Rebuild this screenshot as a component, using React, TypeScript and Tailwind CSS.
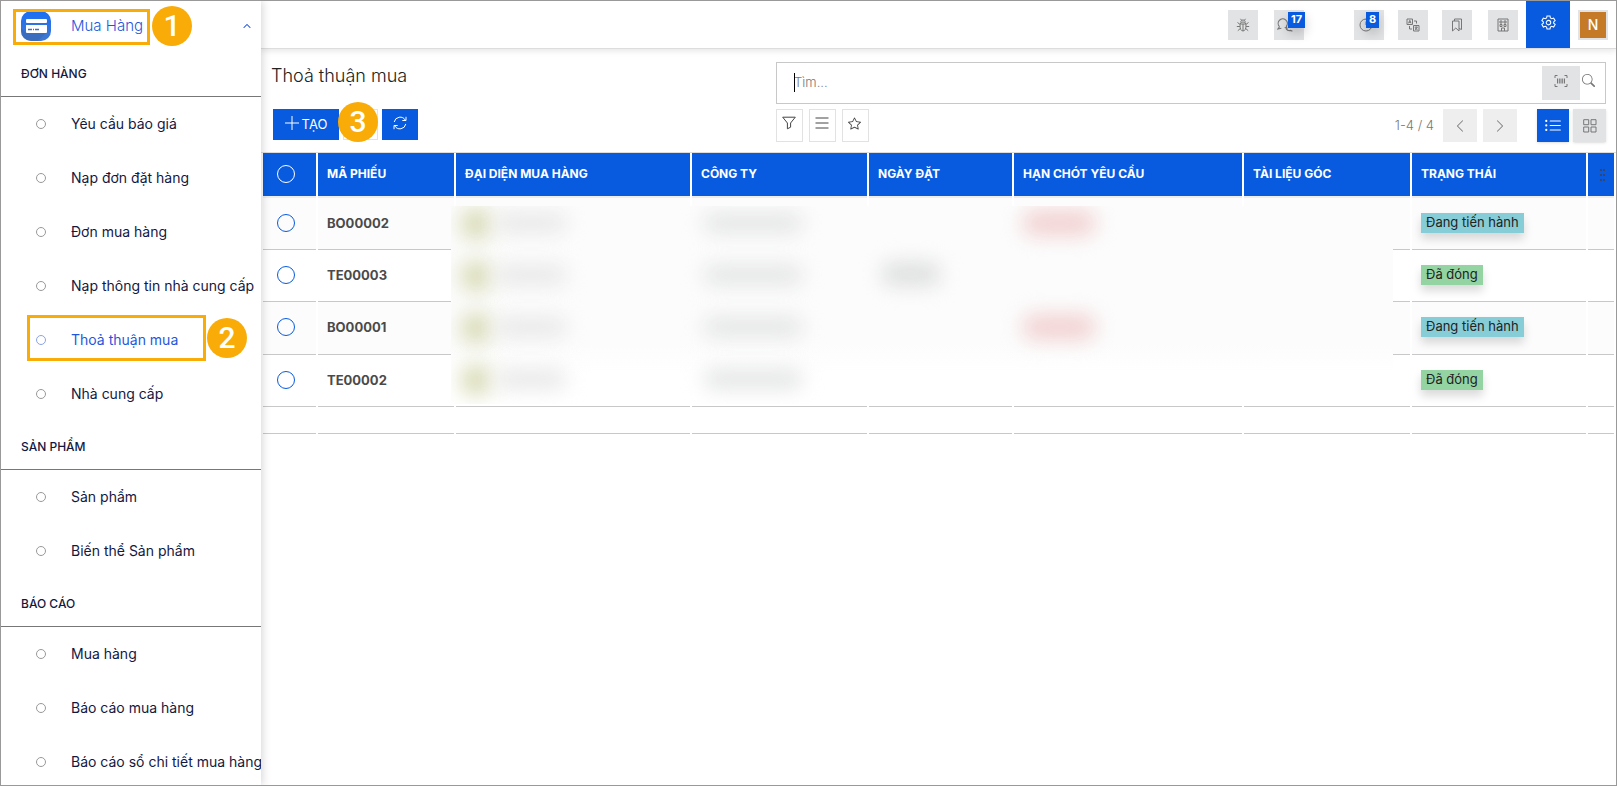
import React, { useState } from 'react';
import { BsChevronLeft, BsChevronRight, BsChevronUp, BsListUl, BsSearch, BsStar } from 'react-icons/bs';

type Status = 'open' | 'closed';

interface Agreement {
  code: string;
  status: Status;
}

const menu = [
  {
    title: 'ĐƠN HÀNG',
    items: [
      'Yêu cầu báo giá',
      'Nạp đơn đặt hàng',
      'Đơn mua hàng',
      'Nạp thông tin nhà cung cấp',
      'Thoả thuận mua',
      'Nhà cung cấp',
    ],
  },
  { title: 'SẢN PHẨM', items: ['Sản phẩm', 'Biến thể Sản phẩm'] },
  { title: 'BÁO CÁO', items: ['Mua hàng', 'Báo cáo mua hàng', 'Báo cáo sổ chi tiết mua hàng'] },
];

const columns = [
  { label: 'MÃ PHIẾU', width: 'w-[136px]' },
  { label: 'ĐẠI DIỆN MUA HÀNG', width: 'w-[234px]' },
  { label: 'CÔNG TY', width: 'w-[175px]' },
  { label: 'NGÀY ĐẶT', width: 'w-[143px]' },
  { label: 'HẠN CHÓT YÊU CẦU', width: 'w-[228px]' },
  { label: 'TÀI LIỆU GÓC', width: 'w-[166px]' },
  { label: 'TRẠNG THÁI', width: 'w-[174px]' },
];

const agreements: Agreement[] = [
  { code: 'BO00002', status: 'open' },
  { code: 'TE00003', status: 'closed' },
  { code: 'BO00001', status: 'open' },
  { code: 'TE00002', status: 'closed' },
];

// Thin line icons, all on a 14px grid
const iconPaths = {
  bug: 'M7 4c-2 0-3 1.500-3 4s1 5 3 5 3-2.500 3-5-1-4-3-4ZM7 6v7M4.700 4.500C4.700 3 5.500 2 7 2s2.300 1 2.300 2.500M5.500 2.200 4.500.8M8.500 2.200l1-1.400M4.200 6.500 1.500 4.500M9.800 6.500l2.700-2M4 8.500H.8M10 8.500h3.200M4.300 10.500l-2.500 2.200M9.700 10.500l2.500 2.200M4.500 6h5',
  chats: 'M2.200 8.500A4 4 0 1 1 8.300 8l.4 2.200L6.800 9M2.200 8.500.8 10.500l3-.6M8 10.500c1 1.300 2.500 1.700 4 1.200l1.500.8M9.500 4.500c2.500 0 4 2.500 3 5',
  clock: 'M7 1a6 6 0 1 0 6 6M7 3.500V7h3M7 1v1',
  translate: 'M1 1h5.500v5.500H1zM7.500 7.500H13V13H7.500zM2.500 5.300l1.300-3 1.200 3M3 4.300h1.600M8.700 9.200h3M10.200 8.500v.7M8.900 11.800c1.300-.5 2-1.300 2.200-2.500M9.200 10.200l2.400 1.600M8 3h2.500v2.500M3.500 8v3h2.500',
  bookmarks: 'M2.500 3h6.500v10L5.800 10 2.500 13ZM4.500 3V1h7v10.500L9 10.500',
  building: 'M2 1h10v12H2zM5.500 13v-3h3v3M4 3h2v2H4zM8 3h2v2H8zM4 6.500h2v2H4zM8 6.500h2v2H8z',
  gear: 'M5.600 1h2.800l.4 1.800 1.200.7 1.800-.6 1.400 2.400L11.800 6.500v1.200l1.400 1.100-1.400 2.400-1.800-.6-1.200.7-.4 1.700H5.600l-.4-1.700-1.200-.7-1.800.6L.8 8.800l1.400-1.100V6.500L.8 5.300l1.400-2.400 1.800.6 1.200-.7ZM7 5a2.100 2.100 0 1 0 0 4.200A2.100 2.100 0 0 0 7 5Z',
  plus: 'M7 0v14M0 7h14',
  refresh: 'M1.200 6A6 6 0 0 1 12.300 4.200M13 .8v3.700H9.300M12.800 8A6 6 0 0 1 1.700 9.800M1 13.200V9.500h3.700',
  funnel: 'M.7 1.200h12.600L8.600 7v4.200l-3.200 1.600V7Z',
  lines: 'M.5 2h13M.5 7h13M.5 12h13',
  scan: 'M1 4V1.500h2.500M10.500 1.500H13V4M13 10v2.500h-2.500M3.500 12.500H1V10M3.500 4.500v5M5.300 4.500v5M7 4.500v5M8.700 4.500v5M10.500 4.500v5',
  grid: 'M.7.7h5v5h-5zM8 .7h5v5H8zM.7 8h5v5h-5zM8 8h5v5H8z',
};

const Icon: React.FC<{ name: keyof typeof iconPaths; className?: string }> = ({ name, className = 'h-[14px] w-[14px]' }) => (
  <svg viewBox="0 0 14 14" className={className} fill="none" stroke="currentColor" strokeWidth="1" aria-hidden="true">
    <path d={iconPaths[name]} />
  </svg>
);

const Step: React.FC<{ n: number; className: string }> = ({ n, className }) => (
  <span
    className={`absolute z-20 flex h-10 w-10 items-center justify-center rounded-full bg-[#f9ac08] font-[Roboto,sans-serif] text-[30px] leading-none font-medium text-white ${className}`}
  >
    {n}
  </span>
);

const CardLogo = () => (
  <svg viewBox="0 0 30 30" className="h-[30px] w-[30px]" aria-hidden="true">
    <defs>
      <linearGradient id="logo" x1="0" y1="0" x2="0" y2="1">
        <stop offset="0" stopColor="#1a6ff5" />
        <stop offset="1" stopColor="#4178cf" />
      </linearGradient>
    </defs>
    <rect width="30" height="30" rx="10" fill="url(#logo)" />
    <path d="M5 22 0 17v3a10 10 0 0 0 10 10h7l8-8Z" fill="#3a63a8" opacity=".5" />
    <rect x="5" y="8" width="21" height="4" rx="1" fill="#fff" />
    <path d="M5 14h21v7a1 1 0 0 1-1 1H6a1 1 0 0 1-1-1Z" fill="#fff" />
    <path d="M7 18.500h4M12 18.500h1M14 18.500h4" stroke="#3d6fc4" strokeWidth="1.500" />
  </svg>
);

const Sidebar = () => (
  <aside className="relative z-10 w-[260px] shrink-0 overflow-hidden bg-white text-[#14183f] shadow-[2px_0_8px_rgba(0,0,0,0.15)]">
    <button className="relative flex h-[47px] w-full items-center pt-[3px] pl-5 text-[#1f57dc]">
      <CardLogo />
      <span className="pl-5 text-[15px] font-light">Mua Hàng</span>
      <BsChevronUp className="mr-[10px] ml-auto h-2 w-2 stroke-1" />
      <span className="absolute top-2 left-3 h-9 w-[137px] border-3 border-[#f9ac08]" />
      <Step n={1} className="top-[5px] left-[151px]" />
    </button>
    {menu.map((section) => (
      <nav key={section.title} aria-label={section.title}>
        <h2 className="flex h-[49px] items-center border-b border-[#777] pt-1 pl-5 text-xs font-medium">
          {section.title}
        </h2>
        <ul>
          {section.items.map((item) => {
            const active = item === 'Thoả thuận mua';
            return (
              <li key={item} className="relative">
                <a
                  href="#"
                  className={`flex h-[54px] items-center pl-[35px] text-sm whitespace-nowrap ${active ? 'text-[#1f57dc]' : ''}`}
                >
                  <span
                    className={`mr-[25px] h-[10px] w-[10px] shrink-0 rounded-full border ${active ? 'border-[#8aa4e8]' : 'border-[#999]'}`}
                  />
                  {item}
                </a>
                {active && (
                  <>
                    <span className="pointer-events-none absolute top-[2px] left-[26px] h-[46px] w-[179px] border-3 border-[#f9ac08]" />
                    <Step n={2} className="top-[5px] left-[206px]" />
                  </>
                )}
              </li>
            );
          })}
        </ul>
      </nav>
    ))}
  </aside>
);

const topButton = 'relative flex h-[30px] w-[30px] items-center justify-center bg-[#e2e3e5] text-[#777]';
const badge =
  'absolute top-[2px] flex h-4 items-center justify-center bg-[#085bde] text-[11px] leading-none font-bold text-white shadow-[0_5px_12px_rgba(0,0,0,0.2)]';

const TopBar = () => (
  <header className="flex h-[48px] items-center justify-end border-b border-[#ddd] bg-white pr-2 shadow-[0_2px_6px_rgba(0,0,0,0.1)]">
    <button aria-label="Gỡ lỗi" className={`${topButton} mr-4`}>
      <Icon name="bug" />
    </button>
    <button aria-label="Trò chuyện" className={`${topButton} mr-[50px] pr-2`}>
      <Icon name="chats" className="h-4 w-4" />
      <span className={`${badge} -right-px w-[17px]`}>17</span>
    </button>
    <button aria-label="Hoạt động" className={`${topButton} mr-[14px] pr-[6px]`}>
      <Icon name="clock" />
      <span className={`${badge} right-[5px] w-[13px]`}>8</span>
    </button>
    <button aria-label="Ngôn ngữ" className={`${topButton} mr-[14px]`}>
      <Icon name="translate" />
    </button>
    <button aria-label="Dấu trang" className={`${topButton} mr-4`}>
      <Icon name="bookmarks" />
    </button>
    <button aria-label="Công ty" className={`${topButton} mr-2`}>
      <Icon name="building" />
    </button>
    <button aria-label="Cài đặt" className="mr-2 flex h-[47px] w-11 items-center justify-center bg-[#085bde] pb-1 text-white">
      <Icon name="gear" className="h-[15px] w-[15px]" />
    </button>
    <button className="h-[30px] w-[30px] border-2 border-[#e2e3e5] bg-[#c47a26] text-sm font-medium text-white">N</button>
  </header>
);

const filterButton = 'flex h-[33px] w-[27px] items-center justify-center border border-[#e2e2e2] pr-[2px] pb-[5px] text-[#444]';

const Toolbar = () => {
  const [query, setQuery] = useState('');

  return (
    <div className="grid grid-cols-[505fr_830fr] px-[10px] pt-[13px] pb-[10px]">
      <div>
        <h1 className="h-[47px] text-lg leading-7 font-light text-[#222]">Thoả thuận mua</h1>
        <div className="relative flex gap-1 pl-[2px]">
          <button className="flex h-[31px] w-[66px] items-center justify-center gap-[3px] bg-[#085bde] text-[13px] text-white">
            <Icon name="plus" className="mb-[3px] h-[14px] w-[14px]" />
            TẠO
          </button>
          <button aria-label="Tải xuống" className="h-[31px] w-[35px] border border-[#e2e2e2]" />
          <button aria-label="Tải lại" className="flex h-[31px] w-9 items-center justify-center bg-[#085bde] pb-[3px] text-white">
            <Icon name="refresh" />
          </button>
          <Step n={3} className="-top-[7px] left-[67px]" />
        </div>
      </div>

      <div>
        <div className="relative flex h-[42px] border border-[#c8c8c8] pt-[3px]">
          <span className="absolute top-[10px] left-[17px] h-[19px] w-px bg-black" />
          <input
            aria-label="Tìm kiếm"
            value={query}
            onChange={(e) => setQuery(e.target.value)}
            placeholder="Tìm..."
            className="h-8 min-w-0 flex-1 pl-[17px] text-[13px] font-light outline-none placeholder:text-[#777]"
          />
          <button aria-label="Quét mã" className="flex h-[34px] w-[38px] items-center justify-center bg-[#e2e3e5] pb-1 text-[#777]">
            <Icon name="scan" />
          </button>
          <button aria-label="Tìm" className="mr-[9px] flex h-7 w-4 items-center justify-center text-[#777]">
            <BsSearch className="h-[13px] w-[13px]" />
          </button>
        </div>
        <div className="mt-[5px] flex items-center gap-[6px] text-[#777]">
          <button aria-label="Lọc" className={filterButton}>
            <Icon name="funnel" />
          </button>
          <button aria-label="Nhóm" className={filterButton}>
            <Icon name="lines" />
          </button>
          <button aria-label="Yêu thích" className={filterButton}>
            <BsStar className="h-[13px] w-[13px]" />
          </button>
          <span className="mr-[3px] ml-auto text-[13px] font-light">1-4 / 4</span>
          <button aria-label="Trang trước" className="flex h-[33px] w-[34px] items-center justify-center bg-[#eee]">
            <BsChevronLeft className="h-[14px] w-[14px]" />
          </button>
          <button aria-label="Trang sau" className="flex h-[33px] w-[34px] items-center justify-center bg-[#eee]">
            <BsChevronRight className="h-[14px] w-[14px]" />
          </button>
          <button
            aria-label="Danh sách"
            className="ml-[14px] flex h-[33px] w-8 items-center justify-center bg-[#085bde] text-white shadow"
          >
            <BsListUl className="h-[18px] w-[18px]" />
          </button>
          <button aria-label="Lưới" className="-ml-[2px] flex h-[33px] w-[33px] items-center justify-center bg-[#e2e3e5] shadow">
            <Icon name="grid" />
          </button>
        </div>
      </div>
    </div>
  );
};

const smudge = 'absolute rounded-full blur-[10px]';

// Private columns are covered by a smeared panel
const PrivacyMask = () => (
  <div className="pointer-events-none absolute top-[53px] right-[223px] left-[190px] overflow-hidden bg-linear-to-b from-[#fcfcfc] from-70% to-white to-85%">
    {agreements.map((row, i) => (
      <div key={row.code} className="relative h-[52px] last:h-[42px]">
        <span className={`${smudge} top-[2px] left-[9px] h-8 w-8 bg-[#dadcb8]`} />
        <span className={`${smudge} top-[7px] left-[44px] h-5 w-[72px] bg-[#e8e8e8]`} />
        <span className={`${smudge} top-[7px] left-[252px] h-5 w-[100px] bg-[#e4e5e5]`} />
        {i === 1 && <span className={`${smudge} top-1 left-[430px] h-6 w-[60px] bg-[#dedfdf]`} />}
        {i % 2 === 0 && <span className={`${smudge} top-1 left-[571px] h-[26px] w-[74px] bg-[#f2d2d2]`} />}
      </div>
    ))}
  </div>
);

const circle = 'block h-[18px] w-[18px] appearance-none rounded-full border';

const AgreementTable = () => (
  <div className="relative border-t border-[#ddd]">
    <table className="w-full table-fixed border-separate border-spacing-x-[2px] border-spacing-y-0">
      <thead>
        <tr className="h-[45px] text-left text-xs text-white">
          <th className="w-[53px] border-b-2 border-[#eee] bg-[#085bde] pb-[2px] pl-[14px]">
            <input type="checkbox" aria-label="Chọn tất cả" className={`${circle} border-white`} />
          </th>
          {columns.map((col) => (
            <th
              key={col.label}
              className={`${col.width} border-b-2 border-[#eee] bg-[#085bde] pb-[2px] pl-[9px] font-bold whitespace-nowrap`}
            >
              {col.label}
            </th>
          ))}
          <th className="w-[26px] border-b-2 border-[#eee] bg-[#085bde] pl-3">
            <svg viewBox="0 0 6 14" className="h-[14px] w-[6px]" fill="#34466e" aria-hidden="true">
              <path d="M0 1h2v2H0zM3 1h2v2H3zM0 6h2v2H0zM3 6h2v2H3zM0 11h2v2H0zM3 11h2v2H3z" />
            </svg>
          </th>
        </tr>
      </thead>
      <tbody>
        {agreements.map((row) => (
          <tr key={row.code} className="h-[52px] odd:bg-[#fcfcfc] nth-[3]:h-[53px]">
            <td className="border-b border-[#c8c8c8] pb-[2px] pl-[14px]">
              <input type="checkbox" aria-label={`Chọn ${row.code}`} className={`${circle} border-[#085bde]`} />
            </td>
            <td className="border-b border-[#c8c8c8] pl-[9px] text-[13px] font-bold text-[#4a4a4a]">{row.code}</td>
            {columns.slice(2).map((col) => (
              <td key={col.label} className="border-b border-[#c8c8c8]" />
            ))}
            <td className="border-b border-[#c8c8c8] pb-[2px] pl-[9px] text-[13px] text-[#222]">
              <span
                className={`flex h-5 w-fit items-center px-[5px] shadow-[0_6px_10px_rgba(0,0,0,0.15)] ${row.status === 'open' ? 'bg-[#87cdd8]' : 'bg-[#94d3a2]'}`}
              >
                {row.status === 'open' ? 'Đang tiến hành' : 'Đã đóng'}
              </span>
            </td>
            <td className="border-b border-[#c8c8c8]" />
          </tr>
        ))}
        <tr className="h-[27px]">
          {['select', ...columns.map((col) => col.label), 'more'].map((key) => (
            <td key={key} className="border-b border-[#c8c8c8]" />
          ))}
        </tr>
      </tbody>
    </table>
    <PrivacyMask />
  </div>
);

export default function App() {
  return (
    <div className="flex h-screen overflow-hidden border border-[#999] bg-white font-[Inter,sans-serif]">
      <Sidebar />
      <main className="min-w-0 flex-1">
        <TopBar />
        <Toolbar />
        <AgreementTable />
      </main>
    </div>
  );
}
